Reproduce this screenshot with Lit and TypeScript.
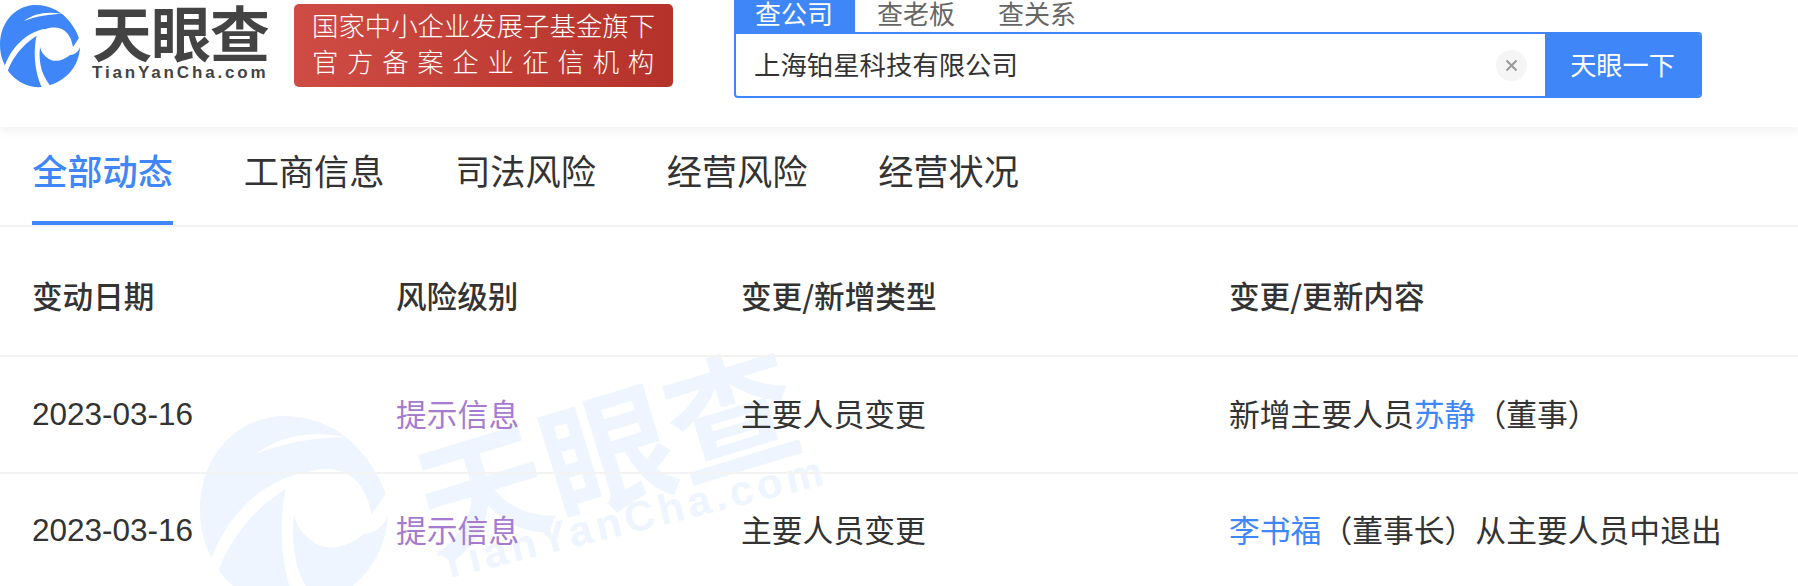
import { LitElement, html, css, svg } from "lit";
import { customElement } from "lit/decorators.js";

const logoMark = () => svg`
  <path class="mk" d="M33 0C48 -1 62 6 70 17C76 25 79 31 80 38C81 58 68 78 42 82C19 84 0 64 0 40C0 18 14 2 33 0Z"/>
  <path class="cut" d="M24 16C34 8 48 6 62 9C50 9 37 11 24 16Z"/>
  <path class="cut" d="M4 63C11 42 26 28 44 24L46 26C31 32 14 47 7 68Z"/>
  <path class="cut" d="M37 29C46 21 60 20 67 28C71 33 72 37 73 42L79 33L82 36C80 45 76 50 70 50C64 55 55 58 49 54C44 51 41 47 40 42C38 60 43 72 52 83L42 83C34 66 33 44 37 29Z"/>
`;

@customElement("app-root")
export class AppRoot extends LitElement {
  static styles = css`
    :host { display: block; width: 1798px; height: 586px; overflow: hidden; position: relative; background: #fff;
      font-family: "Noto Sans CJK SC", "Liberation Sans", sans-serif; color: #333; }
    .mk { fill: currentColor; }
    .cut { fill: #fff; }
    .header { height: 127px; display: flex; align-items: flex-start; box-shadow: 0 4px 10px rgba(0,0,0,.06); position: relative; z-index: 2; background: #fff; }
    .logo { width: 80px; height: 82px; margin-top: 5px; color: #3f87f9; display: block; flex: none; overflow: visible; }
    .brand { margin: 0 0 0 12px; width: 181px; flex: none; color: #434343; }
    .brand .cn { font-size: 60px; font-weight: 700; line-height: 62px; height: 62px; white-space: nowrap; letter-spacing: -1px; }
    .brand .en { font-family: "Liberation Sans", sans-serif; font-size: 17px; font-weight: 700; line-height: 20px; letter-spacing: 2.85px; margin-top: 1px; white-space: nowrap; }
    .banner { margin: 4px 0 0 21px; width: 379px; height: 83px; border-radius: 5px; flex: none; box-sizing: border-box; padding: 3px 0 0 18px;
      background: linear-gradient(90deg, #cf4c45, #b5322a); color: #fff; }
    .banner div { font-size: 26.4px; line-height: 36px; white-space: nowrap; font-weight: 300; }
    .banner .l2 { letter-spacing: 8.7px; }
    .search { margin-left: 61px; width: 968px; flex: none; }
    .stabs { display: flex; height: 32px; }
    .stab { width: 121px; box-sizing: border-box; padding-left: 22px; font-size: 26px; line-height: 25px; color: #666; overflow: hidden; white-space: nowrap; }
    .stab.on { background: #3f87f9; color: #fff; padding-left: 21px; }
    .sbox { height: 66px; display: flex; border-radius: 0 4px 4px 4px; overflow: hidden; box-sizing: border-box; border: 2px solid #3f87f9; }
    .input { flex: 1; display: flex; align-items: center; padding: 0 0 3px 18px; font-size: 26.4px; color: #333; }
    .input span { flex: 1; }
    .clear { width: 31px; height: 31px; border-radius: 50%; background: #f5f5f5; color: #999; margin: 3px 18px 0 0; display: block; }
    .btn { width: 155px; background: #3f87f9; color: #fff; font-size: 26.2px; display: flex; align-items: center; justify-content: center; padding-bottom: 3px; }
    .tabs { display: flex; gap: 70.5px; height: 98px; padding-left: 32px; border-bottom: 2px solid #f3f3f3; position: relative; z-index: 1; }
    .tab { width: 141px; height: 98px; box-sizing: border-box; font-size: 35.2px; line-height: 44px; padding-top: 21px; text-align: center; white-space: nowrap; }
    .tab.on { color: #3f87f9; font-weight: 500; border-bottom: 4px solid #3f87f9; }
    .row { display: grid; grid-template-columns: 364px 345px 488px 1fr; padding-left: 32px; border-bottom: 2px solid #f3f3f3; align-items: center; height: 115px; font-size: 30.8px; position: relative; z-index: 1; white-space: nowrap; }
    .row > div { padding-bottom: 4px; }
    .row:last-child > div { padding-bottom: 6px; }
    .row.head { height: 128px; font-weight: 500; font-size: 30.6px; }
    .row.head > div { padding: 8px 0 0; }
    .row > .date { font-family: "Liberation Sans", sans-serif; font-size: 31.5px; padding-bottom: 1px; }
    .row:last-child > .date { padding-bottom: 3px; }
    .risk { color: #a67bd0; }
    a { color: #3f87f9; text-decoration: none; }
    .wm { position: absolute; inset: 0; color: #eef5fe; z-index: 0; }
    .wm .cut { fill: #fff; }
    .wmlogo { position: absolute; left: 200px; top: 416px; width: 188px; height: 193px; overflow: visible; }
    .wmcn { position: absolute; left: 405px; top: 355px; width: 400px; text-align: center; font-size: 130px; line-height: 180px; font-weight: 700; transform: rotate(-17deg); white-space: nowrap; }
    .wmen { position: absolute; left: 433px; top: 490px; width: 400px; text-align: center; font-family: "Liberation Sans", sans-serif; font-size: 42px; line-height: 56px; font-weight: 700; letter-spacing: 4.3px; transform: rotate(-14deg); white-space: nowrap; }
  `;

  render() {
    const tabs = ["全部动态", "工商信息", "司法风险", "经营风险", "经营状况"];
    return html`
      <div class="wm">
        <svg class="wmlogo" viewBox="0 0 80 82">${logoMark()}</svg>
        <div class="wmcn">天眼查</div>
        <div class="wmen">TianYanCha.com</div>
      </div>
      <div class="header">
        <svg class="logo" viewBox="0 0 80 82">${logoMark()}</svg>
        <div class="brand">
          <div class="cn">天眼查</div>
          <div class="en">TianYanCha.com</div>
        </div>
        <div class="banner">
          <div>国家中小企业发展子基金旗下</div>
          <div class="l2">官方备案企业征信机构</div>
        </div>
        <div class="search">
          <div class="stabs">
            <div class="stab on">查公司</div>
            <div class="stab">查老板</div>
            <div class="stab">查关系</div>
          </div>
          <div class="sbox">
            <div class="input">
              <span>上海铂星科技有限公司</span>
              <svg class="clear" viewBox="0 0 31 31"><path d="M10.5 10.5L20.5 20.5M20.5 10.5L10.5 20.5" stroke="currentColor" stroke-width="2" fill="none"/></svg>
            </div>
            <div class="btn">天眼一下</div>
          </div>
        </div>
      </div>
      <div class="tabs">
        ${tabs.map((t, i) => html`<div class="tab ${i === 0 ? "on" : ""}">${t}</div>`)}
      </div>
      <div class="row head">
        <div>变动日期</div><div>风险级别</div><div>变更/新增类型</div><div>变更/更新内容</div>
      </div>
      <div class="row">
        <div class="date">2023-03-16</div><div class="risk">提示信息</div><div>主要人员变更</div>
        <div>新增主要人员<a>苏静</a>（董事）</div>
      </div>
      <div class="row">
        <div class="date">2023-03-16</div><div class="risk">提示信息</div><div>主要人员变更</div>
        <div><a>李书福</a>（董事长）从主要人员中退出</div>
      </div>
    `;
  }
}
